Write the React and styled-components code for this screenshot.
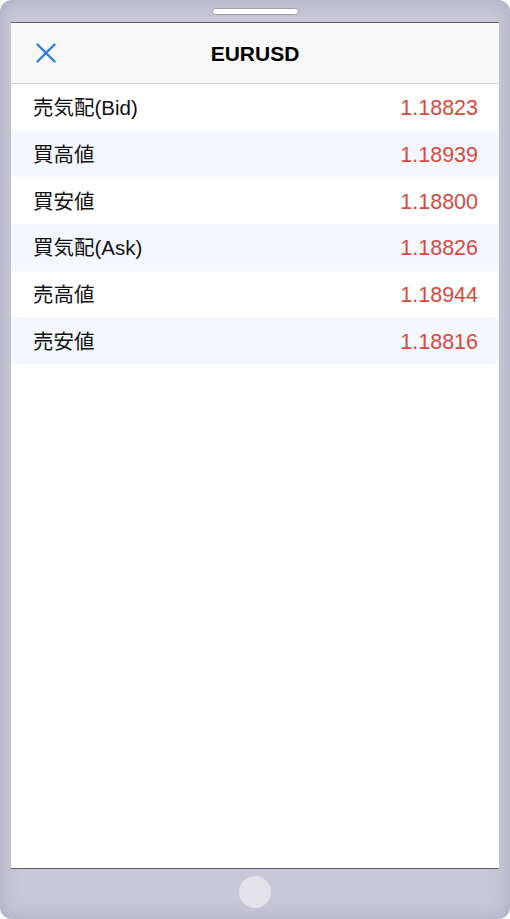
import * as React from "react";
import styled, { createGlobalStyle } from "styled-components";

const GlobalStyle = createGlobalStyle`
  html, body {
    margin: 0;
    padding: 0;
    background: #ffffff;
  }
  body {
    font-family: "Liberation Sans", "Noto Sans CJK JP", sans-serif;
  }
`;

const quotes = [
  { label: "売気配(Bid)", value: "1.18823" },
  { label: "買高値", value: "1.18939" },
  { label: "買安値", value: "1.18800" },
  { label: "買気配(Ask)", value: "1.18826" },
  { label: "売高値", value: "1.18944" },
  { label: "売安値", value: "1.18816" },
];

export default function App() {
  return (
    <>
      <GlobalStyle />
      <Device>
        <TopBezel>
          <Speaker />
        </TopBezel>
        <Screen>
          <Header>
            <CloseButton aria-label="close">
              <svg width="20" height="20" viewBox="0 0 20 20">
                <path
                  d="M1.5 1.5 L18.5 18.5 M18.5 1.5 L1.5 18.5"
                  stroke="#2f7cf6"
                  strokeWidth="2.4"
                  strokeLinecap="round"
                  fill="none"
                />
              </svg>
            </CloseButton>
            <Title>EURUSD</Title>
          </Header>
          <QuoteList>
            {quotes.map((q, i) => (
              <QuoteRow key={q.label} $alt={i % 2 === 1}>
                <QuoteLabel>{q.label}</QuoteLabel>
                <QuoteValue>{q.value}</QuoteValue>
              </QuoteRow>
            ))}
          </QuoteList>
        </Screen>
        <BottomBezel>
          <HomeButton />
        </BottomBezel>
      </Device>
    </>
  );
}

const Device = styled.div`
  width: 510px;
  height: 919px;
  box-sizing: border-box;
  border-radius: 12px;
  background: #c8c8d6;
  box-shadow: inset 0 0 20px rgba(165, 165, 190, 0.85);
  display: flex;
  flex-direction: column;
  overflow: hidden;
`;

const TopBezel = styled.div`
  height: 22px;
  display: flex;
  justify-content: center;
  padding-top: 8px;
  box-sizing: border-box;
`;

const Speaker = styled.div`
  width: 87px;
  height: 7px;
  box-sizing: border-box;
  border-radius: 4px;
  background: #ffffff;
  border: 1px solid #9c9ca6;
`;

const Screen = styled.div`
  flex: 1;
  margin: 0 11px;
  background: #ffffff;
  border-top: 1px solid #5e5e62;
  border-bottom: 1px solid #5e5e62;
  display: flex;
  flex-direction: column;
`;

const Header = styled.div`
  position: relative;
  height: 60px;
  background: #f8f8f8;
  border-bottom: 1px solid #cfcfd2;
  display: flex;
  align-items: center;
  justify-content: center;
`;

const CloseButton = styled.div`
  position: absolute;
  left: 25px;
  top: 20px;
  width: 20px;
  height: 20px;
  display: flex;
`;

const Title = styled.div`
  font-size: 21px;
  font-weight: 700;
  color: #000000;
  padding-top: 2px;
`;

const QuoteList = styled.div`
  display: flex;
  flex-direction: column;
`;

const QuoteRow = styled.div`
  height: 46.67px;
  display: flex;
  align-items: center;
  justify-content: space-between;
  padding: 2px 21px 0 22px;
  box-sizing: border-box;
  background: ${(p) => (p.$alt ? "#f4f7fe" : "#ffffff")};
`;

const QuoteLabel = styled.span`
  display: block;
  font-size: 20.5px;
  line-height: 24px;
  color: #111111;
`;

const QuoteValue = styled.span`
  display: block;
  font-size: 21.5px;
  line-height: 24px;
  color: #d9483b;
`;

const BottomBezel = styled.div`
  height: 50px;
  display: flex;
  justify-content: center;
  padding-top: 7px;
  box-sizing: border-box;
`;

const HomeButton = styled.div`
  width: 32px;
  height: 32px;
  border-radius: 50%;
  background: #e2e2e8;
`;
